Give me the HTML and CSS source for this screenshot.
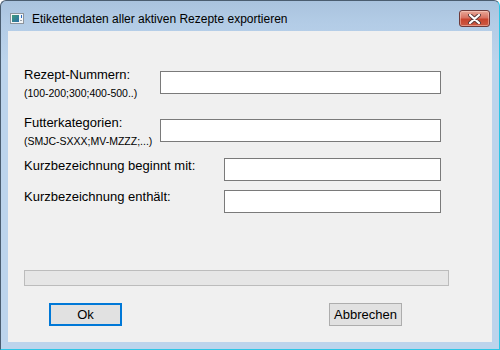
FILE: index.html
```html
<!DOCTYPE html>
<html lang="de">
<head>
<meta charset="utf-8">
<title>Etikettendaten aller aktiven Rezepte exportieren</title>
<link rel="stylesheet" href="styles.css">
</head>
<body>
<div class="window">
  <div class="titlebar">
    <svg class="app-icon" width="14" height="11" viewBox="0 0 14 11">
      <defs>
        <linearGradient id="g" x1="0" y1="0" x2="1" y2="1">
          <stop offset="0" stop-color="#3f9a7a"/>
          <stop offset="1" stop-color="#2a6fa8"/>
        </linearGradient>
      </defs>
      <rect x="0.5" y="0.5" width="13" height="10" fill="#f4f6f8" stroke="#8d949c"/>
      <rect x="2" y="2" width="7" height="7" fill="url(#g)"/>
      <rect x="11" y="2" width="1" height="3" fill="#2b6cc4"/>
      <rect x="10" y="7" width="2" height="1" fill="#9aa3ad"/>
    </svg>
    <span class="title">Etikettendaten aller aktiven Rezepte exportieren</span>
    <div class="close">
      <svg width="13" height="10" viewBox="0 0 13 10">
        <path d="M2 1 L11 9 M11 1 L2 9" stroke="#5a3a3a" stroke-width="4" stroke-linecap="round"/>
        <path d="M2 1 L11 9 M11 1 L2 9" stroke="#ffffff" stroke-width="2.2" stroke-linecap="round"/>
      </svg>
    </div>
  </div>
  <div class="client">
    <div class="row r1">
      <div class="lbl narrow">
        <div class="main">Rezept-Nummern:</div>
        <div class="hint">(100-200;300;400-500..)</div>
      </div>
      <div class="field long"></div>
    </div>
    <div class="row r2">
      <div class="lbl narrow">
        <div class="main">Futterkategorien:</div>
        <div class="hint">(SMJC-SXXX;MV-MZZZ;...)</div>
      </div>
      <div class="field long"></div>
    </div>
    <div class="row r3">
      <div class="lbl wide"><div class="main single">Kurzbezeichnung beginnt mit:</div></div>
      <div class="field short"></div>
    </div>
    <div class="row r4">
      <div class="lbl wide"><div class="main single">Kurzbezeichnung enthält:</div></div>
      <div class="field short"></div>
    </div>
    <div class="progress"></div>
    <div class="buttons">
      <button class="btn default">Ok</button>
      <button class="btn">Abbrechen</button>
    </div>
  </div>
</div>
</body>
</html>
```

FILE: styles.css
```css
html, body {
  margin: 0;
  padding: 0;
  background: #ffffff;
}

.window {
  width: 500px;
  height: 350px;
  box-sizing: border-box;
  border: 1px solid;
  border-color: #4a5d70 #2cc6e6 #2cc6e6 #4a5d70;
  border-radius: 6px 6px 0 0;
  background: linear-gradient(to bottom, #a9c3de 0px, #b3cce6 22px, #bcd4ec 60px, #bcd4ec 100%);
  display: flex;
  flex-direction: column;
  overflow: hidden;
}

.titlebar {
  height: 30px;
  display: flex;
  align-items: flex-start;
  padding-left: 9px;
  padding-right: 9px;
  font-family: "Liberation Sans", Arial, sans-serif;
  font-size: 12px;
  color: #000000;
}

.app-icon {
  margin-top: 12px;
  flex: none;
}

.title {
  margin-left: 8px;
  margin-top: 9px;
  line-height: 18px;
  white-space: nowrap;
  flex: 1;
}

.close {
  width: 31px;
  height: 17px;
  margin-top: 9px;
  box-sizing: border-box;
  border: 1px solid #6e3a3a;
  border-radius: 3px;
  background: linear-gradient(to bottom, #e8a898 0%, #d87262 45%, #c8442e 55%, #cc5a44 100%);
  display: flex;
  align-items: center;
  justify-content: center;
  box-shadow: inset 0 0 0 1px rgba(255, 220, 210, 0.45);
}

.close svg {
  display: block;
}

.client {
  flex: 1;
  margin: 0 7px 7px 7px;
  background: #f0f0f0;
  padding: 40px 0 0 16px;
  font-family: "Liberation Sans", Arial, sans-serif;
  font-size: 13px;
  color: #000000;
  display: flex;
  flex-direction: column;
}

.row {
  display: flex;
  align-items: flex-start;
  height: 23px;
}

.r2 { margin-top: 25px; }
.r3 { margin-top: 16px; }
.r4 { margin-top: 9px; }

.lbl {
  flex: none;
}

.lbl.narrow { width: 136px; }
.lbl.wide { width: 200px; }

.main {
  line-height: 15px;
  margin-top: -4px;
  white-space: nowrap;
}

.main.single {
  margin-top: 0;
}

.r4 .main.single {
  margin-top: -1px;
}

.hint {
  font-size: 10.5px;
  line-height: 12px;
  margin-top: 5px;
  white-space: nowrap;
}

.field {
  flex: none;
  height: 23px;
  box-sizing: border-box;
  border: 1px solid #7a7a7a;
  background: #ffffff;
}

.field.long { width: 281px; }
.field.short { width: 217px; }

.progress {
  margin-top: 57px;
  width: 425px;
  height: 16px;
  box-sizing: border-box;
  border: 1px solid #bcbcbc;
  background: #e6e6e6;
}

.buttons {
  margin-top: 17px;
  display: flex;
  padding-left: 25px;
  gap: 207px;
}

.btn {
  width: 73px;
  height: 23px;
  box-sizing: border-box;
  margin: 0;
  padding: 0;
  border: 1px solid #adadad;
  background: #e1e1e1;
  font-family: "Liberation Sans", Arial, sans-serif;
  font-size: 13px;
  color: #000000;
  line-height: 21px;
}

.btn.default {
  border: 2px solid #0078d7;
  line-height: 19px;
}
```
